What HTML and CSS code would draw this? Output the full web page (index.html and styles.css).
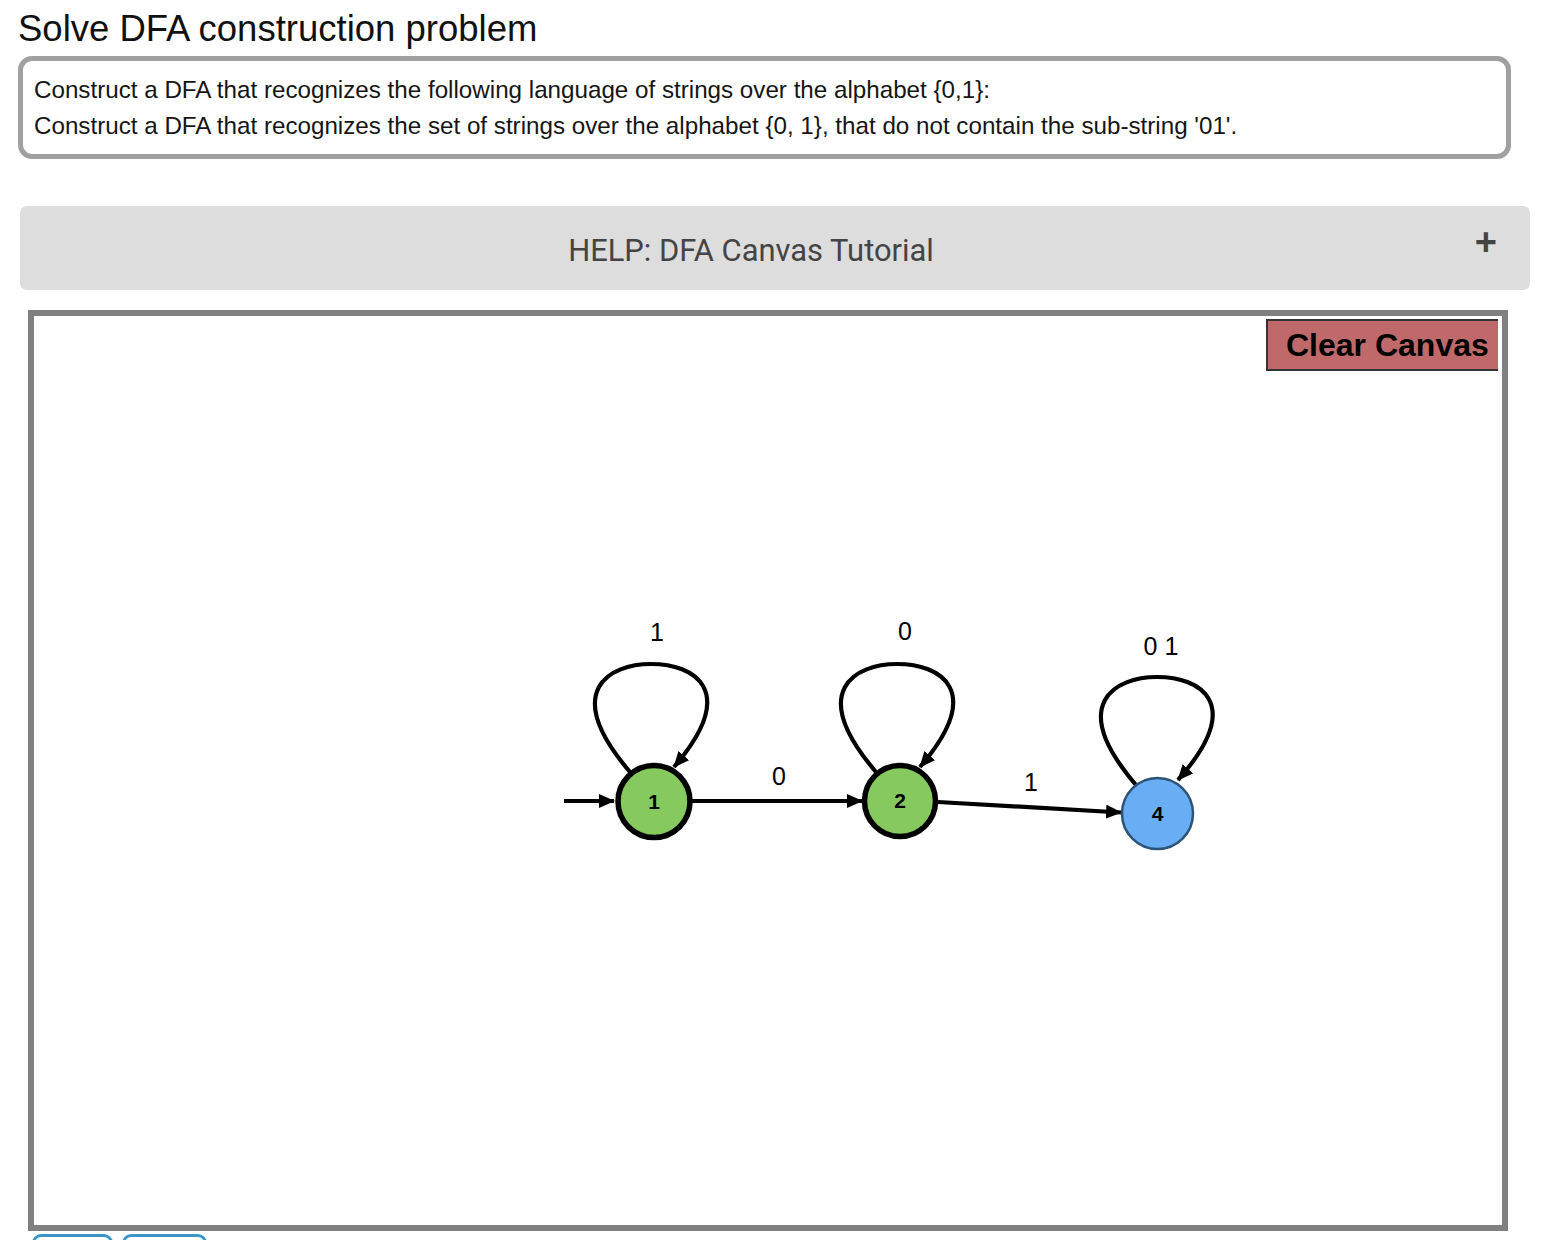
FILE: index.html
```html
<!DOCTYPE html>
<html>
<head>
<meta charset="utf-8">
<link rel="stylesheet" href="styles.css">
</head>
<body>
<div class="page">
  <h1 class="title">Solve DFA construction problem</h1>
  <div class="problem">
    <div>Construct a DFA that recognizes the following language of strings over the alphabet {0,1}:</div>
    <div>Construct a DFA that recognizes the set of strings over the alphabet {0, 1}, that do not contain the sub-string '01'.</div>
  </div>
  <div class="help">
    <span class="help-text">HELP: DFA Canvas Tutorial</span>
    <span class="help-plus">+</span>
  </div>
  <div class="canvas">
    <svg class="diagram" viewBox="34 316 1468 909" width="1468" height="909">
      <defs>
        <marker id="arr" markerWidth="16" markerHeight="14" refX="15" refY="7" orient="auto" markerUnits="userSpaceOnUse">
          <path d="M0 0 L16 7 L0 14 Z" fill="#000"/>
        </marker>
      </defs>
      <g fill="none" stroke="#000" stroke-width="4.2">
        <line x1="564" y1="801" x2="614" y2="801" marker-end="url(#arr)"/>
        <line x1="692" y1="801" x2="862" y2="801" marker-end="url(#arr)"/>
        <line x1="938" y1="802" x2="1121" y2="812.5" marker-end="url(#arr)"/>
        <path d="M 630 772 C 560 690, 610 664, 651 664 C 694 664, 740 690, 674 767" marker-end="url(#arr)"/>
        <path d="M 876 772 C 806 690, 856 664, 897 664 C 940 664, 986 690, 920 767" marker-end="url(#arr)"/>
        <path d="M 1136 785 C 1066 703, 1116 677, 1157 677 C 1200 677, 1246 703, 1178 780" marker-end="url(#arr)"/>
      </g>
      <g>
        <circle cx="654" cy="801.5" r="36" fill="#86c95f" stroke="#000" stroke-width="5.5"/>
        <circle cx="900" cy="801" r="35.5" fill="#86c95f" stroke="#000" stroke-width="5.5"/>
        <circle cx="1157.5" cy="813.5" r="35.5" fill="#69adf5" stroke="#2b5477" stroke-width="2.5"/>
      </g>
      <g class="node-label" text-anchor="middle">
        <text x="654" y="809">1</text>
        <text x="900" y="808">2</text>
        <text x="1157.5" y="821">4</text>
      </g>
      <g class="edge-label" text-anchor="middle">
        <text x="657" y="641">1</text>
        <text x="905" y="640">0</text>
        <text x="1161" y="655">0 1</text>
        <text x="779" y="785">0</text>
        <text x="1031" y="791">1</text>
      </g>
    </svg>
    <button class="clear-btn">Clear Canvas</button>
  </div>
  <div class="actions">
    <button class="act act-a">&nbsp;</button>
    <button class="act act-b">&nbsp;</button>
  </div>
</div>
</body>
</html>
```

FILE: styles.css
```css
html, body {
  margin: 0;
  padding: 0;
  background: #fff;
}
body {
  font-family: "Liberation Sans", Arial, Helvetica, sans-serif;
  color: #111;
}
.page {
  padding: 8px 0 0 0;
  width: 1564px;
}
.title {
  margin: 0 0 7px 18px;
  font-size: 36.5px;
  font-weight: normal;
  line-height: 41px;
  color: #111;
}
.problem {
  margin-left: 18px;
  width: 1493px;
  box-sizing: border-box;
  border: 5px solid #a0a0a0;
  border-radius: 14px;
  padding: 11px 11px 10px 11px;
  font-size: 24.2px;
  line-height: 36px;
  color: #151515;
}
.help {
  position: relative;
  margin: 47px 0 0 20px;
  width: 1510px;
  height: 84px;
  box-sizing: border-box;
  padding-right: 48px;
  background: #dddddd;
  border-radius: 7px;
  display: flex;
  align-items: center;
  justify-content: center;
}
.help-text {
  font-family: Roboto, "Liberation Sans", sans-serif;
  font-size: 30.9px;
  color: #444;
  padding-top: 4px;
}
.help-plus {
  position: absolute;
  right: 33px;
  top: 17px;
  font-size: 38px;
  font-weight: bold;
  color: #444;
  line-height: 1;
}
.canvas {
  position: relative;
  margin: 20px 0 0 28px;
  width: 1480px;
  height: 921px;
  box-sizing: border-box;
  border: 6px solid #808080;
  background: #fff;
}
.diagram {
  display: block;
}
.node-label text {
  font-family: "Liberation Sans", Arial, sans-serif;
  font-weight: bold;
  font-size: 21px;
  fill: #000;
}
.edge-label text {
  font-family: "Liberation Sans", Arial, sans-serif;
  font-size: 25px;
  fill: #000;
}
.clear-btn {
  position: absolute;
  top: 3px;
  right: 4px;
  width: 232px;
  height: 52px;
  box-sizing: border-box;
  background: #c0696a;
  border: 2px solid #333;
  border-right: none;
  font-family: "Liberation Sans", Arial, sans-serif;
  font-weight: bold;
  font-size: 32px;
  color: #000;
  padding: 0 0 0 18px;
  text-align: left;
  line-height: 1;
}
.actions {
  display: flex;
  gap: 9px;
  margin: 3px 0 0 32px;
}
.act {
  height: 30px;
  box-sizing: border-box;
  border: 3px solid #3d96c8;
  border-radius: 9px;
  background: #fff;
  padding: 0;
}
.act-a { width: 81px; }
.act-b { width: 85px; }
```
